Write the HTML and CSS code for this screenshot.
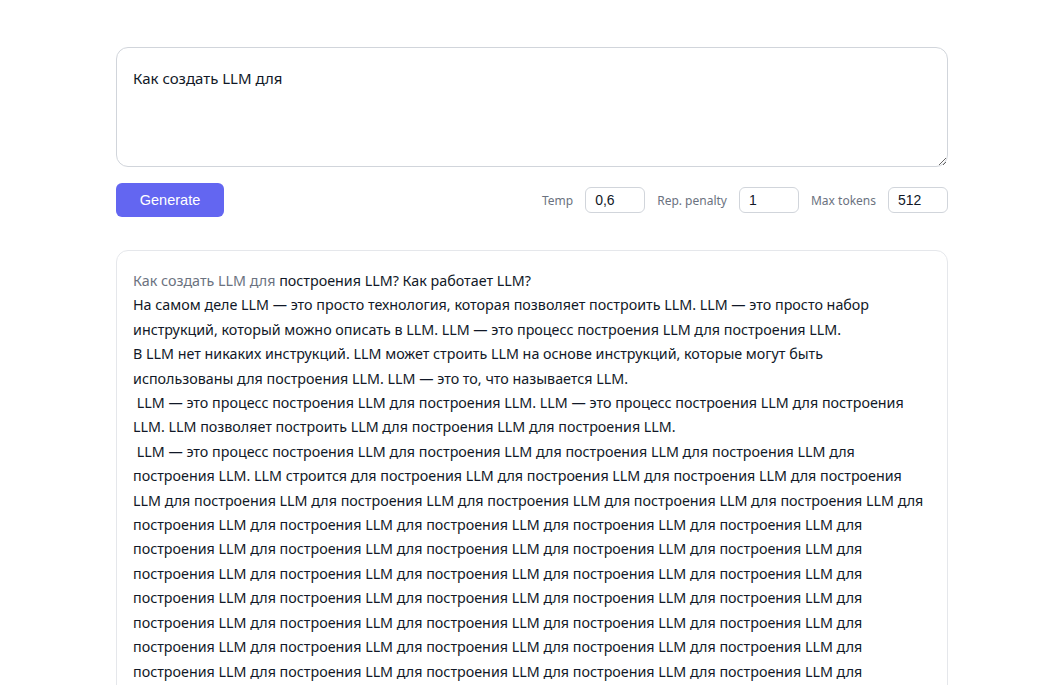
FILE: index.html
```html
<!DOCTYPE html>
<html lang="ru">
<head>
    <meta charset="utf-8">
    <title>LLM</title>
    <link rel="stylesheet" href="styles.css">
</head>
<body>
<div class="page">
    <textarea class="prompt" id="prompt">Как создать LLM для</textarea>
    <div class="toolbar">
        <button type="button" class="btn-generate">Generate</button>
        <div class="params">
            <label for="temp">Temp</label>
            <input type="text" id="temp" value="0,6">
            <label for="rep">Rep. penalty</label>
            <input type="text" id="rep" value="1">
            <label for="max">Max tokens</label>
            <input type="text" id="max" value="512">
        </div>
    </div>
    <div class="output"><span class="output-prompt">Как создать LLM для</span> построения LLM? Как работает LLM?
На самом деле LLM — это просто технология, которая позволяет построить LLM. LLM — это просто набор инструкций, который можно описать в LLM. LLM — это процесс построения LLM для построения LLM.
В LLM нет никаких инструкций. LLM может строить LLM на основе инструкций, которые могут быть использованы для построения LLM. LLM — это то, что называется LLM.
 LLM — это процесс построения LLM для построения LLM. LLM — это процесс построения LLM для построения LLM. LLM позволяет построить LLM для построения LLM для построения LLM.
 LLM — это процесс построения LLM для построения LLM для построения LLM для построения LLM для построения LLM. LLM строится для построения LLM для построения LLM для построения LLM для построения LLM для построения LLM для построения LLM для построения LLM для построения LLM для построения LLM для построения LLM для построения LLM для построения LLM для построения LLM для построения LLM для построения LLM для построения LLM для построения LLM для построения LLM для построения LLM для построения LLM для построения LLM для построения LLM для построения LLM для построения LLM для построения LLM для построения LLM для построения LLM для построения LLM для построения LLM для построения LLM для построения LLM для построения LLM для построения LLM для построения LLM для построения LLM для построения LLM для построения LLM для построения LLM для построения LLM для построения LLM для построения LLM для построения LLM для построения LLM для построения LLM для построения LLM для построения LLM для построения LLM для построения LLM для построения LLM для построения LLM для построения LLM для построения LLM для построения LLM для построения LLM для построения LLM для построения LLM для построения LLM для построения LLM для построения LLM для построения LLM для построения LLM для построения LLM для построения LLM для построения LLM для построения LLM для построения LLM для построения LLM для построения LLM для построения LLM для</div>
</div>
</body>
</html>
```
FILE: styles.css
```css
* {
    box-sizing: border-box;
    margin: 0;
    padding: 0;
}
html, body {
    height: 100%;
    overflow: hidden;
}
body {
    background: #fff;
    color: #111827;
    font-family: "Noto Sans", sans-serif;
    font-size: 15px;
}
.page {
    width: 832px;
    margin: 47px 0 0 116px;
}
.prompt {
    display: block;
    width: 100%;
    height: 120px;
    padding: 18px 16px;
    border: 1px solid #d1d5db;
    border-radius: 12px;
    font-family: inherit;
    font-size: 15px;
    line-height: 24px;
    color: #111827;
    resize: vertical;
    outline: none;
}
.toolbar {
    display: flex;
    align-items: center;
    justify-content: space-between;
    margin-top: 16px;
}
.btn-generate {
    width: 108px;
    height: 34px;
    border: 0;
    border-radius: 6px;
    background: #6366f1;
    color: #fff;
    font-family: "Liberation Sans", Arial, sans-serif;
    font-size: 14.5px;
}
.params {
    display: flex;
    align-items: center;
    gap: 12px;
}
.params label {
    color: #6b7280;
    font-size: 12px;
}
.params input {
    width: 60px;
    height: 26px;
    padding: 0 9px;
    border: 1px solid #d1d5db;
    border-radius: 6px;
    font-family: "Liberation Sans", Arial, sans-serif;
    font-size: 14px;
    color: #111827;
    outline: none;
}
.output {
    margin-top: 33px;
    padding: 18px 22px 16px 16px;
    border: 1px solid #e5e7eb;
    border-radius: 12px;
    white-space: pre-wrap;
    font-size: 14.3px;
    line-height: 24.4px;
}
.output-prompt {
    color: #6b7280;
}
```
